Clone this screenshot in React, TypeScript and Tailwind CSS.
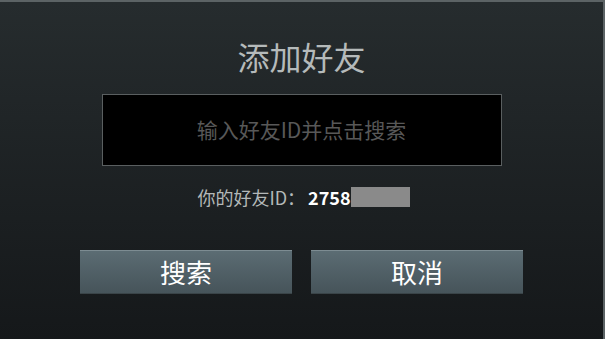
export default function App() {
  return (
    <div
      className="relative h-[339px] w-[605px] overflow-hidden border-t-2 border-r-2 border-[#5c6365] bg-gradient-to-b from-[#262c2e] to-[#15181a]"
      style={{ fontFamily: '"Noto Sans CJK SC", "Noto Sans", sans-serif' }}
    >
      <div className="flex flex-col items-center">
        {/* Title */}
        <h1 className="mt-[37px] text-[32px] leading-[34px] text-[#b5baba]">添加好友</h1>

        {/* Input */}
        <div className="mt-[21px] flex h-[72px] w-[400px] items-center justify-center border border-[#5a5f60] bg-black">
          <span className="text-[21px] text-[#585858]">输入好友ID并点击搜索</span>
        </div>

        {/* My ID */}
        <div className="mt-[20px] flex h-[22px] items-center pl-[4px] text-[18px] leading-[22px]">
          <span className="text-[#b3b8b8]">你的好友ID：</span>
          <span className="ml-[3px] font-semibold text-white">2758</span>
          <span className="h-[20px] w-[59px] bg-[#8a8a8a]" />
        </div>

        {/* Buttons */}
        <div className="mt-[42px] flex gap-[19px]">
          <button className="h-[44px] w-[212px] border-t border-b border-[#7d8c92] border-b-[#3a4448] bg-gradient-to-b from-[#5b6c73] to-[#46545a] text-[26px] leading-[42px] text-white">
            搜索
          </button>
          <button className="h-[44px] w-[212px] border-t border-b border-[#7d8c92] border-b-[#3a4448] bg-gradient-to-b from-[#5b6c73] to-[#46545a] text-[26px] leading-[42px] text-white">
            取消
          </button>
        </div>
      </div>
    </div>
  );
}
